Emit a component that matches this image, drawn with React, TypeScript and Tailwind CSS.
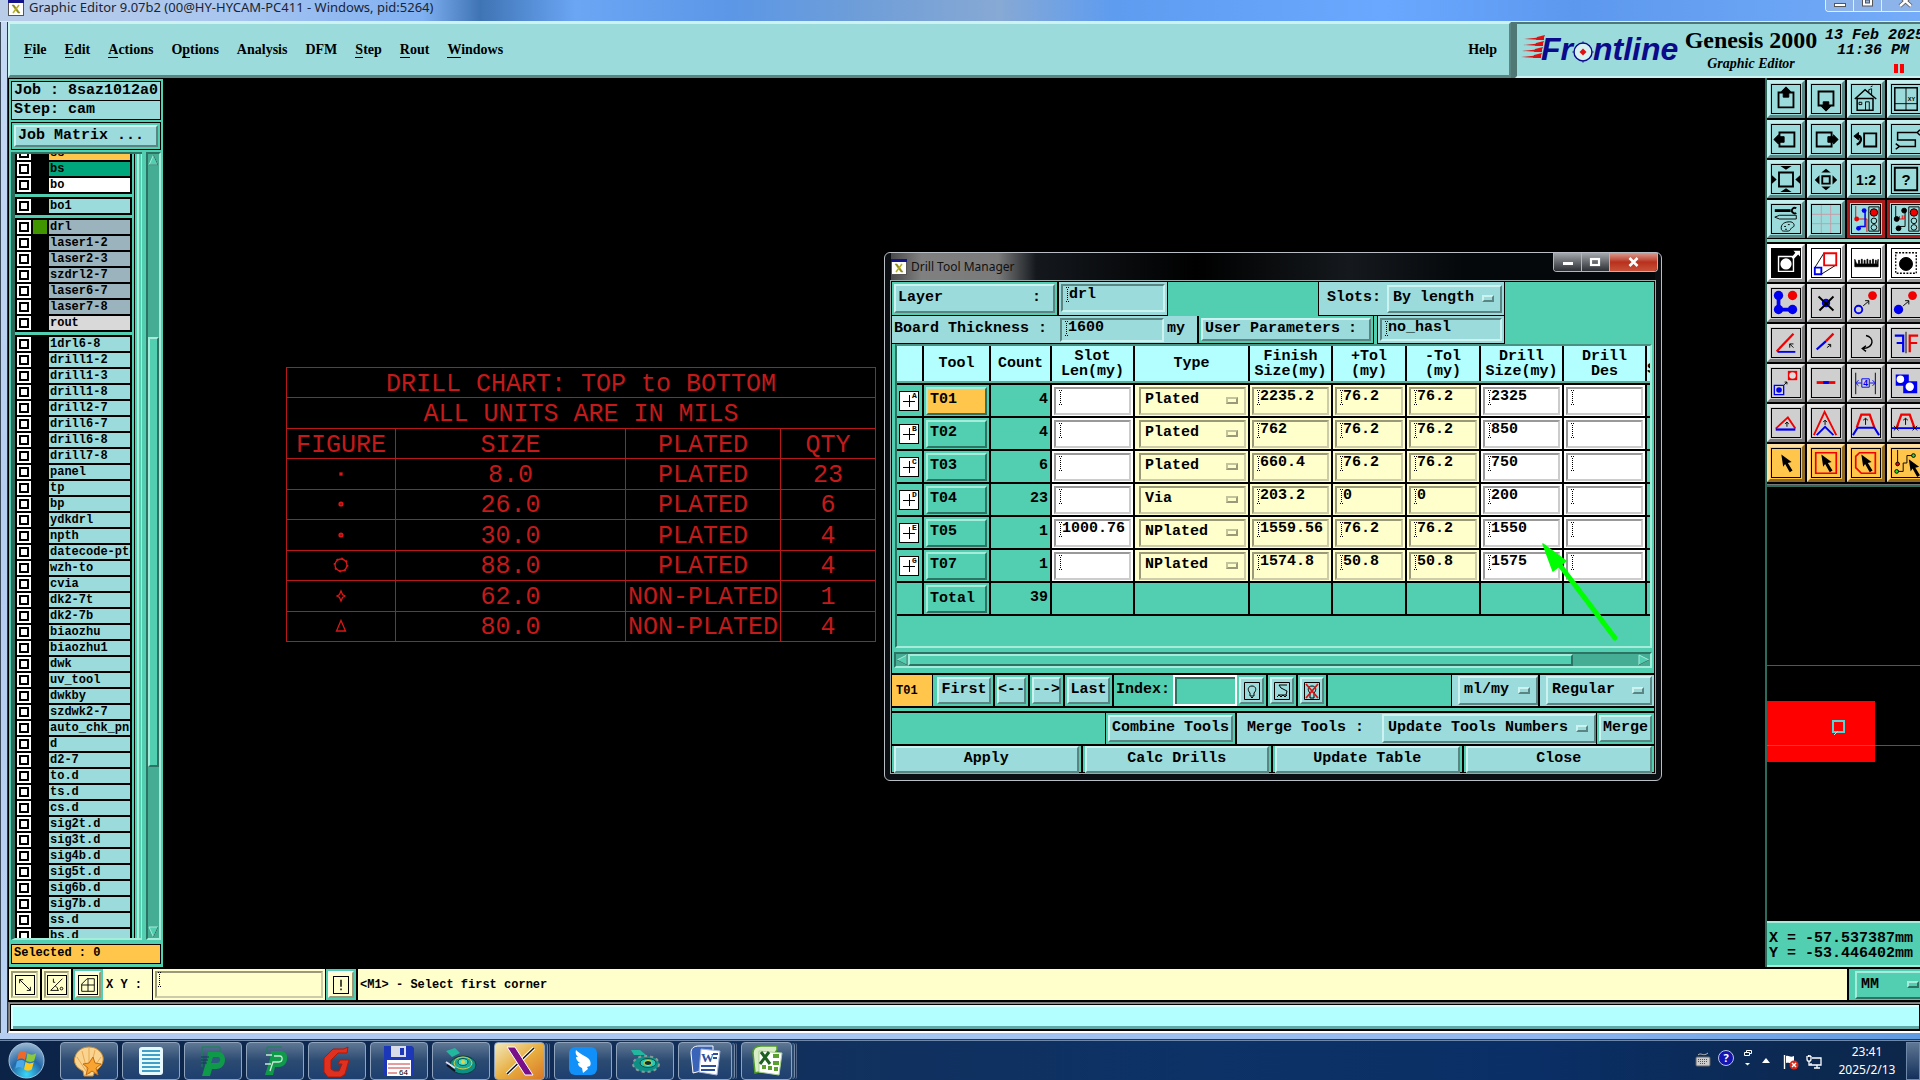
import type { ReactNode } from "react";
import { useState } from "react";

// Motif-style bevels, one set per base colour
const OUT_CYAN = "border-2 border-t-[#cdf3f1] border-l-[#cdf3f1] border-b-[#5a8583] border-r-[#5a8583] bg-[#9bdbdb]";
const IN_CYAN = "border-2 border-t-[#5a8583] border-l-[#5a8583] border-b-[#cdf3f1] border-r-[#cdf3f1] bg-[#9bdbdb]";
const OUT_GREEN = "border-2 border-t-[#a6ecda] border-l-[#a6ecda] border-b-[#2c7363] border-r-[#2c7363] bg-[#52ceb0]";
const IN_CREAM = "border-2 border-t-[#9a9a7a] border-l-[#9a9a7a] border-b-[#ccccaa] border-r-[#ccccaa] bg-[#ffffcc]";
const IN_WHITE = "border-2 border-t-[#999] border-l-[#999] border-b-[#ccc] border-r-[#ccc] bg-white";
const MONO = "font-['Liberation_Mono',monospace] font-bold";

const LAYER_GROUPS: { names: string[]; tone: Record<string, string>; base: string }[] = [
  { names: ["ss", "bs", "bo"], tone: { ss: "bg-[#ffc64b]", bs: "bg-[#00a67c]", bo: "bg-white" }, base: "bg-white" },
  { names: ["bo1"], tone: {}, base: "bg-[#9bdbdb]" },
  {
    names: ["drl", "laser1-2", "laser2-3", "szdrl2-7", "laser6-7", "laser7-8", "rout"],
    tone: { rout: "bg-[#d9d9d9]" },
    base: "bg-[#9ab3bc]",
  },
  {
    names: [
      "1drl6-8", "drill1-2", "drill1-3", "drill1-8", "drill2-7", "drill6-7", "drill6-8", "drill7-8",
      "panel", "tp", "bp", "ydkdrl", "npth", "datecode-ptc", "wzh-to", "cvia", "dk2-7t", "dk2-7b",
      "biaozhu", "biaozhu1", "dwk", "uv_tool", "dwkby", "szdwk2-7", "auto_chk_pnl", "d", "d2-7",
      "to.d", "ts.d", "cs.d", "sig2t.d", "sig3t.d", "sig4b.d", "sig5t.d", "sig6b.d", "sig7b.d", "ss.d", "bs.d",
    ],
    tone: {},
    base: "bg-[#9bdbdb]",
  },
];

const TOOLS = [
  { id: "T01", mark: "A", count: 4, slot: "", type: "Plated", finish: "2235.2", plus: "76.2", minus: "76.2", drill: "2325" },
  { id: "T02", mark: "B", count: 4, slot: "", type: "Plated", finish: "762", plus: "76.2", minus: "76.2", drill: "850" },
  { id: "T03", mark: "C", count: 6, slot: "", type: "Plated", finish: "660.4", plus: "76.2", minus: "76.2", drill: "750" },
  { id: "T04", mark: "D", count: 23, slot: "", type: "Via", finish: "203.2", plus: "0", minus: "0", drill: "200" },
  { id: "T05", mark: "E", count: 1, slot: "1000.76", type: "NPlated", finish: "1559.56", plus: "76.2", minus: "76.2", drill: "1550" },
  { id: "T07", mark: "G", count: 1, slot: "", type: "NPlated", finish: "1574.8", plus: "50.8", minus: "50.8", drill: "1575" },
];

const MENUS: [string, number][] = [
  ["File", 0], ["Edit", 0], ["Actions", 0], ["Options", 1], ["Analysis", -1],
  ["DFM", -1], ["Step", 0], ["Rout", 0], ["Windows", 0],
];

function XIcon() {
  return (
    <svg viewBox="0 0 16 16" className="size-4 shrink-0">
      <rect x="0.5" y="0.5" width="15" height="15" fill="#fff" stroke="#555" />
      <rect x="0" y="0" width="16" height="3" fill="#14148c" />
      <path d="M4 5h2l6 8h-2z" fill="#8a8a10" stroke="#8a8a10" strokeWidth="0.5" />
      <path d="M11 5L5 13" stroke="#b8b020" strokeWidth="1.5" />
    </svg>
  );
}

function TitleBar() {
  return (
    <div className="relative flex h-[22px] items-start border-b border-[#dbe9fb] bg-[linear-gradient(90deg,#b9cde8_0%,#a9c6ef_12%,#7fb0f2_22%,#3f74b4_25%,#6ba6f5_30%,#5b97e6_38%,#6f9ed8_45%,#87a9d4_52%,#5e9cf0_58%,#6aa8ff_72%,#5c98ee_82%,#74acf8_100%)] pl-2">
      <XIcon />
      <span className="ml-[5px] text-[13px] leading-[14px] whitespace-nowrap text-[#1c2430] font-['Noto_Sans',sans-serif]">
        Graphic Editor 9.07b2 (00@HY-HYCAM-PC411 - Windows, pid:5264)
      </span>
      <div className="ml-auto flex h-3 overflow-hidden rounded-bl border-b border-l border-[#e3eefc] text-[#333]">
        <button aria-label="Minimize" className="w-7 border-r border-[#e3eefc] bg-[#8db4ea]">
          <svg viewBox="0 0 28 12" className="h-3 w-7"><rect x="8.5" y="3.5" width="11" height="3" fill="#fff" stroke="#555" /></svg>
        </button>
        <button aria-label="Maximize" className="w-7 border-r border-[#e3eefc] bg-[#8db4ea]">
          <svg viewBox="0 0 28 12" className="h-3 w-7"><rect x="8.5" y="-4" width="10" height="10" fill="#fff" stroke="#555" /><rect x="11.5" y="0" width="4" height="3" fill="#8db4ea" stroke="#555" /></svg>
        </button>
        <button aria-label="Close" className="w-[38px] bg-[#8db4ea]">
          <svg viewBox="0 0 40 12" className="h-3 w-10"><path d="M18 -4L29 6M29 -4L18 6" stroke="#555" strokeWidth="4" /><path d="M18 -4L29 6M29 -4L18 6" stroke="#fff" strokeWidth="2.4" /></svg>
        </button>
      </div>
    </div>
  );
}

function FrontlineLogo() {
  return (
    <svg viewBox="0 0 162 40" className="h-10 w-[162px] shrink-0" aria-label="Frontline">
      {[9, 15, 21, 27].map((y, i) => (
        <g key={y} fill="#e01010">
          <path d={`M${4 - i} ${y + 1}L${24 - i} ${y - 1}v3z`} />
          <path d={`M${17 - i} ${y - 1}l8 -2l-2 5h-7z`} />
        </g>
      ))}
      <g fill="#0a0a8a" fontFamily="Liberation Sans, sans-serif" fontSize="32" fontWeight="bold" fontStyle="italic">
        <text x="21" y="31">Fr</text>
        <text x="73" y="31">ntline</text>
      </g>
      <circle cx="63" cy="23" r="9" fill="#d8f2f2" stroke="#0a0a8a" strokeWidth="1.4" />
      <path d="M63 12v3M63 31v3M52 23h3M71 23h3" stroke="#0a0a8a" strokeWidth="0.6" />
      <path d="M63 19.500l3.500 3.500l-3.500 3.500l-3.500 -3.500z" fill="#e01010" />
    </svg>
  );
}

function Header() {
  return (
    <header className="flex h-14 shrink-0 overflow-hidden bg-[#4f7774] font-['Liberation_Serif',serif] font-bold text-black">
      <nav className={`flex flex-1 items-center border-b-[3px] pl-2.5 text-sm ${OUT_CYAN}`}>
        {MENUS.map(([name, u]) => (
          <button key={name} className="mr-2.5 px-1 text-left leading-4">
            {u < 0 ? name : (
              <>{name.slice(0, u)}<span className="border-b border-black">{name[u]}</span>{name.slice(u + 1)}</>
            )}
          </button>
        ))}
        <button className="mr-3 ml-auto">Help</button>
      </nav>
      <div className="ml-1 flex w-[405px] shrink-0 items-center border-t-2 border-b-2 border-l-2 border-t-[#4f7774] border-b-[#cdf3f1] border-l-[#4f7774] bg-[#9bdbdb]">
        <div className="mb-0.5 ml-[3px]"><FrontlineLogo /></div>
        <div className="ml-px w-[136px] shrink-0 text-center">
          <div className="text-2xl leading-7 whitespace-nowrap">Genesis 2000</div>
          <div className="text-sm leading-5 italic">Graphic Editor</div>
        </div>
        <div className="ml-0.5 h-full w-[105px] shrink-0 pt-1 font-['Liberation_Mono',monospace] text-[15px] leading-[15px] whitespace-nowrap italic">
          <div className="pl-1">13 Feb 2025</div>
          <div className="pl-4">11:36 PM</div>
          <div className="mt-1.5 ml-[73px] flex gap-0.5">
            <span className="h-[9px] w-1 bg-[#f00]" />
            <span className="h-[9px] w-1 bg-[#f00]" />
          </div>
        </div>
      </div>
    </header>
  );
}

function Sidebar() {
  return (
    <aside className={`flex w-[155px] shrink-0 flex-col border-t border-l border-black bg-[#52ceb0] px-0.5 pt-0.5 text-black ${MONO}`}>
      <div className="h-5 border border-black bg-[#9bdbdb] pl-0.5 text-[15px] leading-[18px] whitespace-nowrap">Job : 8saz1012a0</div>
      <div className="-mt-px h-5 border border-black bg-[#9bdbdb] pl-0.5 text-[15px] leading-[18px]">Step: cam</div>
      <div className="mt-0.5 border border-black p-0.5">
        <button className={`flex h-[22px] w-full items-center pl-0.5 text-[15px] ${OUT_CYAN}`}>Job Matrix ...</button>
      </div>
      <div className="mt-0.5 flex min-h-0 flex-1">
        <div className="flex min-w-0 flex-1 overflow-hidden border-t-2 border-b-2 border-l-4 border-t-[#2c7363] border-b-[#a6ecda] border-l-[#2c6b5b]">
          <div className="-mt-2 w-[117px] shrink-0 text-xs">
            {LAYER_GROUPS.map((g, i) => (
              <ul key={i} className={`mb-[3px] bg-black ${i ? "pt-0.5" : ""}`}>
                {g.names.map((n) => (
                  <li key={n} className="flex h-4 gap-0.5 px-0.5 pb-0.5">
                    <input type="checkbox" aria-label={n} className="size-3.5 shrink-0 appearance-none border-2 border-white bg-white shadow-[inset_0_0_0_2px_black] checked:bg-black" />
                    <span className={`w-3.5 shrink-0 ${n === "drl" ? "bg-[#419600]" : ""}`} />
                    <span className={`flex-1 overflow-hidden pl-px leading-[14px] whitespace-nowrap ${g.tone[n] ?? g.base}`}>{n}</span>
                  </li>
                ))}
              </ul>
            ))}
          </div>
          <div className="ml-0.5 w-px bg-black" />
          <div className="ml-0.5 w-1 bg-[#a6ecda]" />
          <div className="ml-0.5 w-0.5 bg-[#a6ecda]" />
        </div>
        <div className="ml-1 flex w-[15px] shrink-0 flex-col border-2 border-t-[#2c7363] border-r-[#a6ecda] border-b-[#a6ecda] border-l-[#2c7363] bg-[#45ad94]">
          <svg viewBox="0 0 11 12" className="h-3 w-[11px]"><path d="M5.5 1L10 11H1z" fill="#52ceb0" stroke="#a6ecda" /><path d="M5.5 1L10 11H1" fill="none" stroke="#2c7363" /></svg>
          <div className="h-[171px]" />
          <div className={`flex-[43] ${OUT_GREEN}`} />
          <div className="flex-[16]" />
          <svg viewBox="0 0 11 12" className="h-3 w-[11px]"><path d="M5.5 11L10 1H1z" fill="#52ceb0" stroke="#a6ecda" /><path d="M5.5 11L10 1" fill="none" stroke="#2c7363" /></svg>
        </div>
      </div>
      <div className="mt-1 mb-[3px] h-5 border border-black bg-[#ffc64b] pl-0.5 text-xs leading-[17px]">Selected : 0</div>
    </aside>
  );
}

const CHART_ROWS: [string, string, string, string][] = [
  ["dot", "8.0", "PLATED", "23"],
  ["ring", "26.0", "PLATED", "6"],
  ["ring", "30.0", "PLATED", "4"],
  ["gear", "88.0", "PLATED", "4"],
  ["diamond", "62.0", "NON-PLATED", "1"],
  ["triangle", "80.0", "NON-PLATED", "4"],
];

function Figure({ kind }: { kind: string }) {
  return (
    <svg viewBox="0 0 20 20" className="mx-auto size-5" fill="none" stroke="#d81818" strokeWidth="1.3">
      {kind === "dot" && <rect x="9" y="9" width="2" height="2" fill="#e01818" />}
      {kind === "ring" && <circle cx="10" cy="10" r="1.6" strokeWidth="2" />}
      {kind === "gear" && (
        <>
          <circle cx="10" cy="10" r="6" />
          <circle cx="10" cy="10" r="6.6" strokeWidth="1.6" strokeDasharray="1.8 3.4" />
        </>
      )}
      {kind === "diamond" && <path d="M10 5l1.500 3.500l2.500 1.500l-2.500 1.500l-1.500 3.500l-1.500 -3.500l-2.500 -1.500l2.500 -1.500z" />}
      {kind === "triangle" && <path d="M10 4.500L14.500 15h-9z" />}
    </svg>
  );
}

function DrillChart() {
  const cell = "border border-[#b81818] p-0 text-center font-normal";
  const text = `${cell} pt-1`;
  return (
    <table className="absolute top-[289px] left-[123px] h-[275px] w-[589px] table-fixed border-collapse text-[25px] leading-6 whitespace-nowrap text-[#c41a1a] font-['Liberation_Mono',monospace]">
      <colgroup>
        <col className="w-[109px]" />
        <col className="w-[230px]" />
        <col className="w-[155px]" />
        <col className="w-[95px]" />
      </colgroup>
      <tbody>
        <tr><th colSpan={4} className={text}>DRILL CHART: TOP to BOTTOM</th></tr>
        <tr><th colSpan={4} className={text}>ALL UNITS ARE IN MILS</th></tr>
        <tr>{["FIGURE", "SIZE", "PLATED", "QTY"].map((h) => <th key={h} className={text}>{h}</th>)}</tr>
        {CHART_ROWS.map(([fig, size, plated, qty]) => (
          <tr key={size}>
            <td className={cell}><Figure kind={fig} /></td>
            <td className={text}>{size}</td>
            <td className={text}>{plated}</td>
            <td className={text}>{qty}</td>
          </tr>
        ))}
      </tbody>
    </table>
  );
}

const B = "#0000f0";
const R = "#f00000";
const POINTER = "M10 6l2 13l2 -3l5 9l3 -2l-5 -8l4 -1z";

// Every glyph is drawn on a 30x30 grid
const VIEW_ICONS: [string, ReactNode][] = [
  ["Pan up", <><path d="M7 8h16v16H7z" fill="none" strokeWidth="2" /><path d="M15 2l5 5h-2v6h-6V7h-2z" fill="#000" /></>],
  ["Pan down", <><path d="M7 7h16v15H7z" fill="none" strokeWidth="2" /><path d="M15 28l5 -5h-2v-5h-6v5h-2z" fill="#000" /></>],
  ["Home", <><path d="M3 15L14 5l12 10M5.500 14v13h17V14M5 14.500h18M9 27" fill="none" strokeWidth="1.6" /><path d="M14.500 27v-9h4v9M7.500 18.500h3v2.500h-3zM18 8V5l3 -1v7M20 2l2 -1" fill="none" /></>],
  ["Grid XY", <><path d="M3 3h24v24H3z" fill="none" strokeWidth="1.6" /><path d="M15 3v24M3 20h24" /><text x="17" y="17" fontSize="6" stroke="none">XY</text></>],
  ["Pan left", <><path d="M8 8h16v15H8z" fill="none" strokeWidth="2" /><path d="M2 15.500l5 -5v2h6v6H7v2z" fill="#000" /></>],
  ["Pan right", <><path d="M5 8h16v15H5z" fill="none" strokeWidth="2" /><path d="M28 15.500l-5 -5v2h-6v6h6v2z" fill="#000" /></>],
  ["Previous view", <><path d="M13 9h13v14H13z" fill="none" strokeWidth="2" /><path d="M5 12h3c3 3 1 8 -3 9" fill="none" strokeWidth="2.600" /><path d="M2 12l5 -4v8z" fill="#000" /></>],
  ["Serpentine", <path d="M30 5l-3 3H6v8h19v7H8l-4 -3M30 11l-3 -3M8 23l-4 3" fill="none" strokeWidth="1.6" />],
  ["Zoom in", <><path d="M7.500 8h15v15h-15z" fill="none" strokeWidth="2" /><path d="M0 11l5 4.500l-5 4.500zM30 11l-5 4.500l5 4.500zM9 1h12l-6 4zM9 29h12l-6 -4z" fill="#000" stroke="none" /></>],
  ["Zoom out", <><path d="M11 12h8v8h-8z" fill="none" strokeWidth="2" /><path d="M8 11v10l-5 -5zM22 11v10l5 -5zM10 8h10l-5 -4zM10 23h10l-5 4z" fill="#000" stroke="none" /></>],
  ["Zoom 1:2", <text x="15" y="21" fontSize="15" textAnchor="middle" stroke="none">1:2</text>],
  ["Query", <><path d="M3 3h24v24H3z" fill="none" strokeWidth="2" /><text x="15" y="21" fontSize="16" textAnchor="middle" stroke="none">?</text></>],
  ["Preferences", <><path d="M3 6h17" strokeWidth="3" /><path d="M26 3.500a3 3 0 1 0 0 5" fill="none" strokeWidth="2" /><path d="M3 13l5 -2h18v4H8z" fill="none" /><path d="M10 26c-1 -6 4 -8 9 -8s6 5 3 6s-1 4 -6 4s-5 0 -6 -2zM13 23h2M17 21h2M14 26h2" fill="none" /></>],
  ["Grid", <path d="M10 0v30M20 0v30M0 10h30M0 20h30" stroke="#c99aa5" />],
  ["Net on", <><path d="M4 1v14h12v14" fill="none" stroke={R} /><path d="M14 5v18H8" fill="none" stroke={B} strokeWidth="1.6" /><circle cx="5" cy="15" r="2.600" fill={R} stroke="none" /><circle cx="13" cy="6" r="2.600" fill={B} stroke="none" /><circle cx="7" cy="25" r="2.600" fill={B} stroke="none" /><path d="M18 2h11v26H18z" fill="none" /><circle cx="23.500" cy="8" r="4" fill={R} /><circle cx="23.500" cy="17" r="3" fill="none" /><circle cx="23.500" cy="24" r="3" fill="none" /></>],
  ["Net off", <><path d="M4 1v14M14 5v18H8" fill="none" /><path d="M6 15h7M8 12v3M11 11v4M13 11v4" stroke={R} /><circle cx="5" cy="15" r="2.600" fill="#000" /><circle cx="13" cy="6" r="2.600" fill="#000" /><circle cx="7" cy="25" r="2.600" fill="#000" /><path d="M18 2h11v26H18z" fill="none" /><circle cx="23.500" cy="8" r="4" fill={R} /><circle cx="23.500" cy="17" r="3" fill="none" /><circle cx="23.500" cy="24" r="3" fill="none" /></>],
];

const EDIT_ICONS: [string, ReactNode][] = [
  ["Select frame", <><path d="M0 0h30v30H0z" fill="#000" /><path d="M7 8h16v16H7z" fill="none" stroke="#fff" strokeWidth="1.5" /><circle cx="15" cy="16" r="6" fill="#fff" stroke="none" /><path d="M21 9l4 -5l-2 -2h7v6l-2 -2l-5 5z" fill="#fff" stroke="none" /></>],
  ["Scale", <><path d="M3 20L13 4M10 27l16 -10" /><path d="M13 4.500h13v13H13z" fill="none" stroke={R} strokeWidth="2" /><path d="M3 20h7v7H3z" fill="#fff" stroke={B} strokeWidth="2" /></>],
  ["Measure", <path d="M3 11v8h25v-8l-1 5h-1v-4h-1v4h-2v-5h-1v5h-2v-4h-1v4h-2v-5h-1v5h-2v-4h-1v4h-2v-5h-1v5H8v-4H7v4H5z" fill="#000" strokeWidth="0.8" />],
  ["Feature", <><path d="M4 4h22v22H4z" fill="none" strokeDasharray="2 1.500" strokeWidth="1.4" /><circle cx="15" cy="16" r="7" fill="#000" /></>],
  ["Connect", <><path d="M7 7v15h15" fill="none" stroke={B} strokeWidth="4" /><g stroke="none"><circle cx="7" cy="7" r="5" fill={B} /><circle cx="7" cy="22" r="5" fill={B} /><circle cx="22" cy="22" r="5" fill={B} /><circle cx="22" cy="7" r="5" fill={R} /></g></>],
  ["Delete", <><circle cx="15" cy="15" r="4.500" fill={B} stroke="none" /><path d="M7 8l16 15M23 8L8 23" strokeWidth="2" /></>],
  ["Copy", <><circle cx="7" cy="22" r="4" fill="none" stroke={B} strokeWidth="2" /><circle cx="22" cy="7" r="4.700" fill={R} stroke="none" /><path d="M12 18l6 -5M14 12.500h4v4" fill="none" /></>],
  ["Move", <><circle cx="7" cy="22" r="5" fill={B} stroke="none" /><circle cx="22" cy="7" r="4.700" fill={R} stroke="none" /><path d="M12 18l6 -5M14 12.500h4v4" fill="none" /></>],
  ["Angle", <><path d="M5 24L23 5" stroke={R} strokeWidth="2.400" /><path d="M6 24.500h19" stroke={B} strokeWidth="2" /><path d="M19 16h4M19 16v4M19 16l4 4" fill="none" /></>],
  ["Extend", <><path d="M5 22l10 -9" stroke={B} strokeWidth="2.400" /><path d="M15 13l8 -8" stroke={R} strokeWidth="2.400" /><path d="M16 20l4 -3M17 16.500h3v3" fill="none" /></>],
  ["Rotate", <path d="M15 7c9 2 9 13 -3 14M15 18l-4 3l4 3" fill="none" strokeWidth="1.500" />],
  ["Mirror", <><path d="M3 7h9v18M5 15h7" fill="none" stroke={B} strokeWidth="2.400" /><path d="M15 3v23" /><path d="M28 7h-9v18M19 15h8" fill="none" stroke={R} strokeWidth="2.400" /></>],
  ["Step copy", <><path d="M17 2h10v10H17z" fill={R} stroke="none" /><circle cx="22" cy="7" r="3.500" fill="#ddd" stroke="none" /><path d="M2.500 17.500h10v10h-10z" fill="none" stroke={B} strokeWidth="1.4" /><circle cx="7.500" cy="22.500" r="3" fill={B} stroke="none" /><path d="M13 17l3 -3M13.500 14h2.500v2.500" fill="none" /></>],
  ["Break", <><path d="M5 14.500h20" stroke={R} strokeWidth="3" /><path d="M12 14.500h6" stroke={B} strokeWidth="3" /></>],
  ["Space", <><path d="M4 4v23M25 4v23" /><g stroke={B} fill="none"><path d="M5 15h5M19 15h5M7 12l-3 3l3 3M22 12l3 3l-3 3M10.500 10.500h8v9h-8z" /></g><text x="14.500" y="18.500" fontSize="9" textAnchor="middle" fill={B} stroke="none">4</text></>],
  ["Merge shapes", <><path d="M4 6h14v7h9v13H12v-8H4z" fill={B} stroke="none" /><circle cx="9" cy="11" r="4" fill="#fff" stroke="none" /><circle cx="19" cy="19" r="4.500" fill="#fff" stroke="none" /></>],
  ["Raise", <><path d="M4 21L17 9l8 12" fill="none" stroke={R} strokeWidth="2" /><path d="M4 22h21" stroke={B} strokeWidth="2.400" /><path d="M16 19v-5M14 16l2 -2l2 2" fill="none" /></>],
  ["Raise peak", <><path d="M2 28L13.500 3L26 28" fill="none" stroke={R} strokeWidth="2" /><path d="M5 28l9 -9l9 9" fill="none" stroke={B} strokeWidth="2" /><path d="M14 17v-5M12 14l2 -2l2 2" fill="none" /></>],
  ["Raise flat", <><path d="M5 20l5 -14h9l5 14" fill="none" stroke={R} strokeWidth="2.400" /><path d="M1 28l5 -8h18l5 8" fill="none" stroke={B} strokeWidth="2.200" /><path d="M14.500 17v-7M12 12l2.500 -2l2.500 2" fill="none" /></>],
  ["Raise line", <><path d="M5 20l5 -14h9l5 14" fill="none" stroke={R} strokeWidth="2.400" /><path d="M0 20.500h30" stroke={B} strokeWidth="2" /><path d="M14.500 17v-7M12 12l2.500 -2l2.500 2M2 18l5 5M7 18l-5 5M22 18l5 5M27 18l-5 5" fill="none" /></>],
  ["Pointer", <path d={POINTER} fill="#000" stroke="none" />],
  ["Pointer box", <><path d="M4 4h22v22H4z" fill="none" stroke={R} strokeWidth="1.800" /><path d={POINTER} fill="#000" stroke="none" /></>],
  ["Pointer polygon", <><path d="M8 4h17v22H10l-6 -6V8z" fill="none" stroke={R} strokeWidth="1.800" /><path d={POINTER} fill="#000" stroke="none" /></>],
  ["Pointer net", <><path d="M6 1v15M6 24h6v-9h4V7h6" fill="none" /><circle cx="6" cy="16" r="2" fill={R} /><circle cx="5" cy="24" r="2" fill="#2d2" /><circle cx="23" cy="7" r="2" fill="#2d2" /><path d={POINTER} transform="translate(8 5)" fill="#000" stroke="none" /></>],
];

function ToolButton({ name, tone, children }: { name: string; tone: string; children: ReactNode }) {
  return (
    <button aria-label={name} className={`flex size-[38px] items-center justify-center border-[3px] ${tone}`}>
      <svg viewBox="0 0 30 30" className="size-[30px] shrink-0 border border-black font-['Liberation_Sans',sans-serif] font-bold" stroke="#000">
        {children}
      </svg>
    </button>
  );
}

const TONE_CYAN = "border-t-[#c3efee] border-l-[#c3efee] border-b-[#578886] border-r-[#578886] bg-[#9bdbdb]";
const TONE_RED = "border-[#a81c1c] bg-[#9bdbdb]";
const TONE_WHITE = "border-t-white border-l-white border-b-[#999] border-r-[#999] bg-white";
const TONE_GRAY = "border-t-[#e8e8e8] border-l-[#e8e8e8] border-b-[#7b7b7b] border-r-[#7b7b7b] bg-[#cfcfcf]";
const TONE_AMBER = "border-t-[#ffe0a0] border-l-[#ffe0a0] border-b-[#8f6a20] border-r-[#8f6a20] bg-[#ffc64b]";

function editTone(i: number) {
  if (i < 4) return TONE_WHITE;
  return i < 20 ? TONE_GRAY : TONE_AMBER;
}

function ToolPanel() {
  return (
    <aside className="flex w-[155px] shrink-0 flex-col overflow-hidden border-l-2 border-[#2c6b5b] bg-black">
      <div className="mt-0.5 grid grid-cols-[repeat(4,38px)] gap-0.5">
        {VIEW_ICONS.map(([name, art], i) => (
          <ToolButton key={name} name={name} tone={i > 13 ? TONE_RED : TONE_CYAN}>{art}</ToolButton>
        ))}
      </div>
      <div className="mt-px mb-0.5 h-[3px] shrink-0 bg-[#8fdcc8]" />
      <div className="grid grid-cols-[repeat(4,38px)] gap-0.5">
        {EDIT_ICONS.map(([name, art], i) => (
          <ToolButton key={name} name={name} tone={editTone(i)}>{art}</ToolButton>
        ))}
      </div>
      <div className="mt-0.5 h-[3px] shrink-0 border-t border-[#777] bg-[#2c6b5b]" />
      <div className="relative min-h-0 flex-1 bg-black">
        <svg viewBox="0 0 153 433" className="absolute top-0 left-0 h-[433px] w-[153px]">
          <rect x="0" y="214" width="108" height="61" fill="#f00" />
          <path d="M0 178.500h153M0 258.500h153" stroke="#1d7a1d" />
          <path d="M0 258.500h108" stroke="#b06010" />
          <path d="M66 234h11v11H66z" fill="none" stroke="#4fd8d8" strokeWidth="2" />
          <path d="M67 248l4 -4" stroke="#d8d8d8" />
        </svg>
      </div>
      <div className={`h-[46px] shrink-0 border-t-2 border-b-2 border-t-[#a6ecda] border-b-[#a6ecda] bg-[#52ceb0] pt-2 pl-0.5 text-[15px] leading-[15px] whitespace-pre text-black ${MONO}`}>
        <div>X = -57.537387mm</div>
        <div>Y = -53.446402mm</div>
      </div>
    </aside>
  );
}

function Caret() {
  return (
    <svg viewBox="0 0 3 16" className="pointer-events-none absolute top-[3px] left-[5px] h-4 w-[3px]" stroke="#000">
      <path d="M1.500 2v12" strokeDasharray="1 1" />
      <path d="M0 0.500h1M2 0.500h1M0 14.500h1M2 14.500h1" />
    </svg>
  );
}

function Field({ label, value, tone, pad = "pb-2", className = "h-7 w-full" }: { label: string; value: string; tone: string; pad?: string; className?: string }) {
  return (
    <label className={`relative block ${className}`}>
      <Caret />
      <input aria-label={label} defaultValue={value} className={`block h-full w-full pl-1.5 text-[15px] leading-4 outline-none ${pad} ${tone}`} />
    </label>
  );
}

function OptionMenu({ label, options, tone, knob, className }: { label: string; options: string[]; tone: string; knob: string; className: string }) {
  return (
    <label className={`relative block ${className}`}>
      <select aria-label={label} className={`block h-full w-full appearance-none pl-1 text-[15px] outline-none ${tone}`}>
        {options.map((o) => <option key={o}>{o}</option>)}
      </select>
      <span className={`pointer-events-none absolute top-1/2 right-2 -mt-1 h-[7px] w-3 border-2 ${knob}`} />
    </label>
  );
}

const KNOB_CYAN = "border-t-[#cdf3f1] border-l-[#cdf3f1] border-b-[#5a8583] border-r-[#5a8583]";
const KNOB_CREAM = "border-t-[#c4c49c] border-l-[#c4c49c] border-b-[#9a9a7a] border-r-[#9a9a7a]";

function ToolTable({ current, onSelect }: { current: string; onSelect: (id: string) => void }) {
  const head = "h-[35px] border-r-2 border-black bg-[#b3ffff] p-0 text-center text-[15px] leading-[15px] font-bold overflow-hidden";
  const cell = "h-[33px] border-r-2 border-b-2 border-black px-0.5 py-0";
  return (
    <table className="w-[757px] table-fixed border-separate border-spacing-0 text-[15px]">
      <colgroup>
        <col className="w-[27px]" /><col className="w-[67px]" /><col className="w-[61px]" /><col className="w-[83px]" />
        <col className="w-[115px]" /><col className="w-[83px]" /><col className="w-[74px]" /><col className="w-[74px]" />
        <col className="w-[83px]" /><col className="w-[83px]" /><col className="w-[7px]" />
      </colgroup>
      <thead>
        <tr>
          {["", "Tool", "Count", "Slot\nLen(my)", "Type", "Finish\nSize(my)", "+Tol\n(my)", "-Tol\n(my)", "Drill\nSize(my)", "Drill\nDes"].map((h, i) => (
            <th key={i} className={`${head} whitespace-pre`}>{h}</th>
          ))}
          <th className="overflow-hidden bg-[#b3ffff] p-0 text-left align-bottom font-bold">S</th>
        </tr>
        <tr><td colSpan={11} className="h-1 border-b-2 border-b-black bg-[#5fae9c] p-0" /></tr>
      </thead>
      <tbody>
        {TOOLS.map((t) => (
          <tr key={t.id}>
            <td className={cell}>
              <svg viewBox="0 0 20 20" className="size-5 bg-white" stroke="#000">
                <rect x="0.500" y="0.500" width="19" height="19" fill="#fff" />
                <path d="M4 10.500h12M10.500 4v12" />
                <text x="13" y="7" fontSize="8" stroke="none">{t.mark}</text>
              </svg>
            </td>
            <td className={cell}>
              <button onClick={() => onSelect(t.id)} className={`block h-7 w-full pl-0.5 text-left ${OUT_GREEN} ${t.id === current ? "bg-[#ffc64b]!" : ""}`}>{t.id}</button>
            </td>
            <td className={`${cell} text-right`}>{t.count}</td>
            <td className={`${cell} bg-white`}><Field label={`${t.id} slot length`} value={t.slot} tone={IN_WHITE} /></td>
            <td className={`${cell} bg-[#ffffcc]`}>
              <OptionMenu label={`${t.id} type`} options={[t.type, "Plated", "NPlated", "Via"].filter((o, i, a) => a.indexOf(o) === i)} tone={IN_CREAM} knob={KNOB_CREAM} className="mx-0.5 h-7 w-[107px]" />
            </td>
            <td className={`${cell} bg-[#ffffcc]`}><Field label={`${t.id} finish size`} value={t.finish} tone={IN_CREAM} /></td>
            <td className={`${cell} bg-[#ffffcc]`}><Field label={`${t.id} plus tolerance`} value={t.plus} tone={IN_CREAM} /></td>
            <td className={`${cell} bg-[#ffffcc]`}><Field label={`${t.id} minus tolerance`} value={t.minus} tone={IN_CREAM} /></td>
            <td className={`${cell} bg-white`}><Field label={`${t.id} drill size`} value={t.drill} tone={IN_WHITE} /></td>
            <td className={`${cell} bg-white`}><Field label={`${t.id} designation`} value="" tone={IN_WHITE} /></td>
            <td className="border-b-2 border-black" />
          </tr>
        ))}
        <tr>
          <td className={cell} />
          <td className={cell}><div className={`h-7 pl-0.5 leading-6 ${OUT_GREEN}`}>Total</div></td>
          <td className={`${cell} text-right`}>{TOOLS.reduce((n, t) => n + t.count, 0)}</td>
          {[0, 1, 2, 3, 4, 5, 6].map((i) => <td key={i} className={cell} />)}
          <td className="border-b-2 border-black" />
        </tr>
      </tbody>
    </table>
  );
}

function NavButton({ label, width, children }: { label: string; width: string; children: ReactNode }) {
  return (
    <div className={`h-full border-r-2 border-black p-0.5 ${width}`}>
      <button aria-label={label} className={`flex h-full w-full items-center justify-center whitespace-nowrap ${OUT_CYAN}`}>{children}</button>
    </div>
  );
}

function DrillToolManager() {
  const [current, setCurrent] = useState("T01");
  return (
    <section className={`absolute top-[252px] left-[884px] w-[778px] rounded-md border border-[#b9bec4] bg-[#0b0f14] px-[6px] pb-[7px] text-[15px] text-black ${MONO}`}>
      <div className="flex h-7 items-start bg-[linear-gradient(90deg,#4a4a4a_0%,#808080_4%,#7a7a7a_14%,#14181d_19%,#000_40%,#15191d_60%,#05080b_75%)] pt-1.5">
        <XIcon />
        <h1 className="ml-1 text-xs leading-4 font-normal text-[#111] font-['Noto_Sans',sans-serif]">Drill Tool Manager</h1>
        <div className="-mt-1.5 -mr-[3px] ml-auto flex h-[19px] overflow-hidden rounded-b border border-t-0 border-[#b5b5b5]">
          <button aria-label="Minimize window" className="w-7 border-r border-[#b5b5b5] bg-linear-to-b from-[#a5a8ac] to-[#2e3236]">
            <svg viewBox="0 0 28 18" className="h-full w-7"><rect x="9" y="9" width="10" height="3" fill="#fff" /></svg>
          </button>
          <button aria-label="Maximize window" className="w-7 border-r border-[#b5b5b5] bg-linear-to-b from-[#a5a8ac] to-[#2e3236]">
            <svg viewBox="0 0 28 18" className="h-full w-7"><rect x="9" y="6" width="8" height="6" fill="none" stroke="#fff" strokeWidth="2.200" /></svg>
          </button>
          <button aria-label="Close window" className="w-[47px] bg-linear-to-b from-[#d99a90] via-[#b8301c] to-[#c85038]">
            <svg viewBox="0 0 46 18" className="h-full w-full"><path d="M19 5l8 8M27 5l-8 8" stroke="#fff" strokeWidth="2.600" /></svg>
          </button>
        </div>
      </div>
      <div className="border border-black bg-[#52ceb0] outline outline-[#9aa]">
        {/* layer / slots */}
        <div className="flex h-[34px]">
          <div className="w-[167px] border-r-2 border-b border-black p-0.5">
            <button className={`flex h-full w-full items-center justify-between pr-3 pl-0.5 ${OUT_CYAN}`}><span>Layer</span><span>:</span></button>
          </div>
          <div className="w-[109px] border-r border-b border-black bg-[#9bdbdb] p-0.5">
            <Field label="Layer" value="drl" tone={IN_CYAN} />
          </div>
          <div className="w-[150px]" />
          <div className="flex w-[187px] items-center border-r border-b border-l border-black bg-[#9bdbdb] pr-0.5 pl-2">
            <span className="flex-1">Slots:</span>
            <OptionMenu label="Slots" options={["By length", "By center"]} tone={OUT_CYAN} knob={KNOB_CYAN} className="h-7 w-[115px]" />
          </div>
        </div>
        {/* board parameters */}
        <div className="flex h-7">
          <div className="flex w-[307px] items-center border-r-2 border-b border-black bg-[#9bdbdb] pl-0.5">
            <span className="w-[166px] whitespace-nowrap">Board Thickness :</span>
            <Field label="Board thickness" value="1600" tone={IN_CYAN} pad="pb-1" className="h-6 w-[104px]" />
            <span className="ml-[3px]">my</span>
          </div>
          <div className="w-[175px] border-r border-b border-black p-0.5">
            <button className={`flex h-full w-full items-center justify-between pr-3 pl-0.5 ${OUT_CYAN}`}><span>User Parameters</span><span>:</span></button>
          </div>
          <div className="ml-[3px] w-[128px] border-r border-b border-l border-black bg-[#9bdbdb] p-0.5">
            <Field label="User parameters" value="no_hasl" tone={IN_CYAN} pad="pb-1" className="h-[23px]" />
          </div>
        </div>
        {/* tool list */}
        <div className="mr-0.5 ml-[3px] h-[304px] overflow-hidden border-2 border-t-[#4a9080] border-r-[#a6ecda] border-b-[#a6ecda] border-l-[#2c7363]">
          <ToolTable current={current} onSelect={setCurrent} />
        </div>
        <div className="mx-0.5 mt-1 flex h-4 border-2 border-t-[#2c7363] border-r-[#a6ecda] border-b-[#a6ecda] border-l-[#2c7363] bg-[#45ad94]">
          <svg viewBox="0 0 12 12" className="size-3"><path d="M1 6l10 -5v10z" fill="#52ceb0" stroke="#a6ecda" /><path d="M1 6l10 5V1" fill="none" stroke="#2c7363" /></svg>
          <div className={`flex-1 ${OUT_GREEN}`} />
          <div className="w-[65px]" />
          <svg viewBox="0 0 12 12" className="size-3"><path d="M11 6L1 1v10z" fill="#52ceb0" stroke="#a6ecda" /><path d="M11 6L1 11" fill="none" stroke="#2c7363" /></svg>
        </div>
        {/* navigation */}
        <div className="mt-[5px] flex h-[35px] border-y-2 border-black">
          <div className="mr-0.5 flex w-[41px] items-center border-r border-black bg-[#ffc64b] pl-1 text-xs">{current}</div>
          <NavButton label="First" width="w-[60px]">First</NavButton>
          <NavButton label="Previous" width="w-[35px]">&lt;--</NavButton>
          <NavButton label="Next" width="w-[35px]">--&gt;</NavButton>
          <NavButton label="Last" width="w-[49px]">Last</NavButton>
          <label className="flex items-center pl-0.5 whitespace-nowrap">
            Index:
            <input className="ml-[3px] h-[31px] w-16 border-2 border-white bg-[#52ceb0] shadow-[inset_2px_2px_0_#2c7363] outline-none" />
          </label>
          <NavButton label="Light" width="w-[31px]">
            <svg viewBox="0 0 16 18" className="h-[18px] w-4" fill="none" stroke="#000"><path d="M0.500 0.500h15v17H0.500zM6 11c-3 -3 -2 -7 2 -7s5 4 2 7v3H6zM7 15.500h2" /></svg>
          </NavButton>
          <NavButton label="Snake" width="w-[30px]">
            <svg viewBox="0 0 16 18" className="h-[18px] w-4" fill="none" stroke="#000"><path d="M0.500 0.500h15v17H0.500zM13 3H5l2 3l6 3l-1 4H4M3 15l2 -2l2 2l2 -2l2 2l2 -2" /></svg>
          </NavButton>
          <NavButton label="Clear" width="w-[30px]">
            <svg viewBox="0 0 16 18" className="h-[18px] w-4" fill="none" stroke="#000"><path d="M0.500 0.500h15v17H0.500zM6 11c-3 -3 -2 -7 2 -7s5 4 2 7v5H6z" /><path d="M2 2l12 14M14 2L2 16" stroke="#e01010" strokeWidth="1.800" /></svg>
          </NavButton>
          <div className="ml-auto flex w-[89px] items-center border-r-2 border-l border-black bg-[#9bdbdb] pl-1.5">
            <OptionMenu label="Units" options={["ml/my", "inch/mil"]} tone={OUT_CYAN} knob={KNOB_CYAN} className="h-[29px] w-full" />
          </div>
          <div className="flex w-[114px] items-center bg-[#9bdbdb] pr-0.5 pl-1.5">
            <OptionMenu label="Mode" options={["Regular", "Via"]} tone={OUT_CYAN} knob={KNOB_CYAN} className="h-[29px] w-full" />
          </div>
        </div>
        <div className="mt-[3px] flex h-[35px] border-y-2 border-black">
          <div className="w-[214px] border-r border-black" />
          <NavButton label="Combine Tools" width="w-[131px]">Combine Tools</NavButton>
          <div className="flex flex-1 items-center bg-[#9bdbdb] pl-2.5 whitespace-nowrap">
            <span className="flex-1">Merge Tools :</span>
            <OptionMenu label="Merge tools" options={["Update Tools Numbers", "Keep Tools Numbers"]} tone={OUT_CYAN} knob={KNOB_CYAN} className="h-[29px] w-[214px]" />
          </div>
          <div className="w-[58px] border-l border-black p-0.5">
            <button className={`flex h-full w-full items-center justify-center ${OUT_CYAN}`}>Merge</button>
          </div>
        </div>
        <div className="grid h-[26px] grid-cols-4">
          {["Apply", "Calc Drills", "Update Table", "Close"].map((b) => (
            <div key={b} className="border-r-2 border-black px-0.5 pb-0.5 last:border-r-0">
              <button className={`flex h-full w-full items-center justify-center ${OUT_CYAN}`}>{b}</button>
            </div>
          ))}
        </div>
      </div>
      <svg viewBox="0 0 80 104" className="pointer-events-none absolute top-[288px] left-[655px] h-[104px] w-20">
        <path d="M16 19L75 97" stroke="#0f0" strokeWidth="5" strokeLinecap="round" />
        <path d="M3 3l23 17l-13 10z" fill="#0f0" stroke="#0f0" strokeWidth="1.500" strokeLinejoin="round" />
      </svg>
    </section>
  );
}

function CommandRow() {
  const art = "size-5 border border-black";
  return (
    <div className={`flex h-[35px] shrink-0 border-y-2 border-l border-black bg-[#ffffcc] text-xs text-black ${MONO}`}>
      <div className="w-[33px] border-r-2 border-black p-0.5">
        <button aria-label="Diagonal" className={`flex h-full w-full items-center justify-center ${IN_CREAM}`}>
          <svg viewBox="0 0 20 20" className={art} fill="none" stroke="#000"><path d="M4 4l12 12M4 8V4h4M12 16h4v-4" /></svg>
        </button>
      </div>
      <div className="w-[31px] border-r-2 border-black p-0.5">
        <button aria-label="Angle" className={`flex h-full w-full items-center justify-center ${IN_CREAM}`}>
          <svg viewBox="0 0 20 20" className={art} fill="none" stroke="#000"><path d="M3 16L16 3M3 16h9M8 11c2 1 3 3 3 5M6 3v4h2" /><circle cx="15" cy="14" r="1.500" /></svg>
        </button>
      </div>
      <div className="w-[30px] bg-[#52ceb0] p-0.5">
        <button aria-label="Snap grid" className="flex h-full w-full items-center justify-center border-2 border-t-[#ffffe8] border-r-[#9a9a7a] border-b-[#9a9a7a] border-l-[#ffffe8] bg-[#ffffcc]">
          <svg viewBox="0 0 18 20" className={art} fill="none" stroke="#000"><path d="M2 9l6 -6h8v14H2zM9 3v14M2 10h14" /></svg>
        </button>
      </div>
      <label className="flex items-center pl-[3px]">
        <span className="w-[46px]">X Y :</span>
        <span className="relative block h-[31px] w-[173px] border-l border-black p-0.5">
          <Caret />
          <input className={`block h-full w-full pl-2 outline-none ${IN_CREAM}`} />
        </span>
      </label>
      <div className="w-[33px] border-r-2 border-l border-black bg-[#52ceb0] p-0.5">
        <button aria-label="Alert" className="flex h-full w-full items-center justify-center border-2 border-t-[#ffffe8] border-r-[#9a9a7a] border-b-[#9a9a7a] border-l-[#ffffe8] bg-[#ffffcc]">
          <svg viewBox="0 0 16 18" className="h-[18px] w-4 border border-black" stroke="#000"><path d="M8 3v8M8 13v2" strokeWidth="1.600" /></svg>
        </button>
      </div>
      <div className="flex flex-1 items-center pl-0.5">&lt;M1&gt; - Select first corner</div>
      <div className="flex w-[73px] shrink-0 items-center overflow-hidden border-l-2 border-black bg-[#52ceb0] pl-1.5">
        <OptionMenu label="Units" options={["MM", "INCH"]} tone={OUT_GREEN} knob="border-t-[#a6ecda] border-l-[#a6ecda] border-b-[#2c7363] border-r-[#2c7363]" className="h-[28px] w-[72px] shrink-0" />
      </div>
    </div>
  );
}

const TASKS: { name: string; width: string; active?: boolean; stack?: boolean; art: ReactNode }[] = [
  { name: "Shell", width: "w-[58px]", art: <><path d="M11 31l-1 -5C3 23 0 17 2 12C4 5 10 2 16 2s12 3 14 10c1 5 -2 11 -8 14l-2 5z" fill="#f8d490" stroke="#c98a30" /><path d="M15 29L4 12M15 29L9 6M16 29V3M16 29l6 -24M16 29l12 -17" stroke="#e8a850" /><path d="M20 12l2 6l6 1l-5 4l2 7l-6 -4l-6 4l2 -7l-5 -4l6 -1z" fill="#f8a430" stroke="#c86a10" /></> },
  { name: "Notepad", width: "w-[58px]", art: <><rect x="4" y="2" width="24" height="28" rx="3" fill="#e8f8ff" /><path d="M7 6h18M7 10h18M7 14h18M7 18h18M7 22h18M7 26h18" stroke="#3f9fc8" strokeWidth="1.800" /></> },
  { name: "Plot", width: "w-[58px]", art: <><path d="M5 2h18M5 2v20M23 2v4" fill="none" stroke="#0d8a4a" /><path d="M11 7h11c8 0 9 17 -3 17h-4l-2 7H5l5 -17z" fill="#0f9a4a" /><path d="M16 12h5c3 0 3 6 -1 6h-6z" fill="#2f5a80" /><path d="M4 12h8M4 15h7M4 18h6" stroke="#123a5a" /></> },
  { name: "Plot 2", width: "w-[58px]", art: <><path d="M8 2h15M8 2v8" fill="none" stroke="#0d8a4a" /><path d="M12 6h10c9 0 8 16 -2 16h-4l-2 8H6l5 -16z" fill="#0f9a4a" /><path d="M15 11h6c3 0 3 6 -1 6h-6l-3 9M7 10h6M6 19h6" stroke="#c8e8d8" strokeWidth="1.300" fill="none" /></> },
  { name: "Genesis", width: "w-[58px]", art: <path d="M27 2l-1 6h-9l-7 7v9l3 2h5l3 -7h-4l2 -4h9l-4 14l-4 3H7l-4 -5V13l9 -9h11z" fill="#e03020" stroke="#b01808" /> },
  { name: "Disk", width: "w-[58px]", art: <><path d="M1 1h28l2 2v28H1z" fill="#1c38b8" /><rect x="8" y="1" width="15" height="11" fill="#d8dce8" /><rect x="17" y="3" width="4" height="7" fill="#1c38b8" /><rect x="4" y="15" width="24" height="16" fill="#fff" /><path d="M5 19h22M5 23h22M5 28h9" stroke="#c83838" /><text x="16" y="30" fontSize="8" fill="#000" fontFamily="Liberation Sans">64</text></> },
  { name: "Gerber tool", width: "w-[58px]", art: <><ellipse cx="18" cy="20" rx="13" ry="9" fill="#0e8f86" stroke="#073c3a" /><ellipse cx="18" cy="18" rx="9" ry="6" fill="#1aa898" stroke="#e0d040" /><ellipse cx="18" cy="17" rx="5" ry="3.500" fill="#40e0d0" stroke="#0a5048" /><circle cx="18" cy="17" r="2" fill="#e8d040" /><path d="M1 6l9 -3l5 5l-8 4z" fill="#22b8a0" /><path d="M1 17l9 6" stroke="#dde" strokeWidth="2" /><path d="M2 20l8 6" stroke="#112" strokeWidth="2" /></> },
  { name: "Graphic Editor", width: "w-[51px]", active: true, stack: true, art: <><path d="M30 3L3 29" stroke="#fff" strokeWidth="3.500" /><path d="M30 3L3 29" stroke="#111" strokeWidth="1.500" /><path d="M3 2h8l18 28h-8z" fill="#7a0f8a" stroke="#fff" /></> },
  { name: "Wing", width: "w-[58px]", art: <><rect x="2" y="2" width="28" height="28" rx="6" fill="#1090f8" /><path d="M9 5c5 5 10 6 13 9c2 3 2 5 1 7l-3 1l1 2l-5 4l-1 -5c-3 -1 -4 -3 -4 -5l2 0c-3 -2 -4 -4 -4 -6l2 0c-2 -2 -3 -4 -2 -7z" fill="#fff" /></> },
  { name: "Gerber tool 2", width: "w-[58px]", art: <><ellipse cx="17" cy="19" rx="13" ry="8" fill="#0e8f86" stroke="#8a9a9a" strokeDasharray="3 3" strokeWidth="2" /><ellipse cx="19" cy="18" rx="8" ry="4.500" fill="#24c8b8" stroke="#0a5048" /><ellipse cx="19" cy="18" rx="4" ry="2.500" fill="#083030" stroke="#e0e040" /><path d="M2 5h9l6 5H5z" fill="#22b8a0" /></> },
  { name: "Word", width: "w-[54px]", stack: true, art: <><path d="M2 8c0 -5 3 -7 8 -7h14v4L12 26l-8 2z" fill="#3a64b8" stroke="#fff" /><path d="M12 4l19 2l-3 24l-18 -3z" fill="#fff" stroke="#9fb4dc" /><text x="12" y="17" fontSize="13" fontWeight="bold" fill="#2b4f9e" fontFamily="Liberation Serif">W</text><path d="M24 9h5M24 13h4M12 21h15M12 25h14" stroke="#2b4f9e" strokeWidth="2" /></> },
  { name: "Excel", width: "w-[51px]", stack: true, art: <><path d="M2 8c0 -5 3 -7 8 -7h16v4L12 26l-8 2z" fill="#d8ecc8" stroke="#4f9a28" strokeWidth="1.500" /><path d="M8 6l23 2l-3 22l-20 -3z" fill="#fff" stroke="#a8cf90" /><path d="M22 11h6M11 22h4M17 23h4M23 24h4M22 18h6" stroke="#5aa02c" strokeWidth="4" /><path d="M10 7l9 12M18 7L9 19" stroke="#1f5f20" strokeWidth="3" /></> },
];

function Taskbar() {
  return (
    <footer className="flex h-10 shrink-0 items-center border-t border-[#6f87a8] bg-[linear-gradient(90deg,#0b2347_0%,#12305c_40%,#0c3266_62%,#0a2f66_80%,#0c2648_100%)] text-white">
      <button aria-label="Start" className="ml-2 size-[37px] shrink-0">
        <svg viewBox="0 0 38 38">
          <defs><radialGradient id="orb" cx="50%" cy="90%" r="90%"><stop offset="0" stopColor="#39d8f8" /><stop offset="0.500" stopColor="#2468a8" /><stop offset="1" stopColor="#9db8d0" /></radialGradient></defs>
          <circle cx="19" cy="19" r="18" fill="url(#orb)" stroke="#a8c4dc" />
          <path d="M11 11c3 -2 6 -2 8 0l-1.500 7.500c-3 -2 -5 -2 -8 0z" fill="#f06828" />
          <path d="M20 11.500c3 2 6 2 9 0l-2 7.500c-2 2 -6 2 -8.500 0z" fill="#8cc83c" />
          <path d="M9 20c3 -2 6 -2 8 0l-1.500 7.500c-3 -2 -5 -2 -8 0z" fill="#4aa8e8" />
          <path d="M18 20.500c3 2 6 2 8.500 0l-2 7.500c-2 2 -6 2 -8 0z" fill="#fcc820" />
        </svg>
      </button>
      <div className="ml-[15px] flex gap-1">
        {TASKS.map((t) => (
          <div key={t.name} className="flex">
            <button
              aria-label={t.name}
              className={`flex h-[38px] items-center justify-center rounded-sm border border-[#8fa3bd] ${t.width} ${t.active ? "bg-linear-to-br from-[#f0e8b8] via-[#e8b040] to-[#d87828]" : "bg-linear-to-b from-[#5f7794] via-[#2b4a72] to-[#1e4070]"}`}
            >
              <svg viewBox="0 0 32 32" className="size-8" fill="none">{t.art}</svg>
            </button>
            {t.stack && <span className="my-px w-[3px] rounded-r border-r border-[#7389a6] bg-[#2b4a72]" />}
            {t.stack && <span className="my-px w-0.5 rounded-r border-r border-[#54698a]" />}
          </div>
        ))}
      </div>
      <div className="ml-auto flex items-center font-['Noto_Sans',sans-serif] text-xs">
        <svg viewBox="0 0 16 16" className="mb-1 size-4" fill="none"><path d="M3 4c3 -3 5 2 10 -2" stroke="#bbb" /><rect x="1" y="6" width="14" height="9" rx="1" fill="#ccc" stroke="#666" /><path d="M3 8.500h10M3 10.500h10M5 12.500h6" stroke="#555" strokeDasharray="1 1" /></svg>
        <svg viewBox="0 0 16 16" className="mb-1.5 ml-[7px] size-4"><circle cx="8" cy="8" r="7.500" fill="#1414b0" stroke="#b8c4e8" /><text x="8" y="12" fontSize="11" fontWeight="bold" textAnchor="middle" fill="#fff">?</text></svg>
        <svg viewBox="0 0 10 18" className="mb-1.5 ml-[9px] h-[18px] w-2.5" fill="none" stroke="#fff"><path d="M1.500 3.500h5v3h-5zM3.500 3.500v-2h5v3h-2" /><path d="M2 14h5l-2.500 2.500z" fill="#fff" stroke="none" /></svg>
        <svg viewBox="0 0 8 5" className="ml-[9px] h-[5px] w-2"><path d="M4 0l4 5H0z" fill="#fff" /></svg>
        <svg viewBox="0 0 16 16" className="mt-0.5 ml-[13px] size-4"><path d="M1.500 1v14" stroke="#fff" strokeWidth="1.400" /><path d="M3 2c3 -1 4 2 8 0v7c-4 1 -5 -1 -8 0z" fill="#fff" /><circle cx="11" cy="11" r="4.500" fill="#d82818" /><path d="M9 9l4 4M13 9l-4 4" stroke="#fff" strokeWidth="1.400" /></svg>
        <svg viewBox="0 0 16 16" className="mt-0.5 ml-[7px] size-4" fill="none" stroke="#fff" strokeWidth="1.300"><path d="M6 4h9v7H5V9M8 14h6M11 11v3M1 2v3c0 3 4 3 4 0V2M3 7v4h3M2.500 1v2M4 1v2" /></svg>
        <div className="ml-3 w-[66px] text-center leading-[18px]">
          <div>23:41</div>
          <div>2025/2/13</div>
        </div>
        <button aria-label="Show desktop" className="ml-1.5 h-[38px] w-3.5 border border-[#6f87a8] bg-linear-to-b from-[#5f7794] to-[#14305a]" />
      </div>
    </footer>
  );
}

export default function App() {
  return (
    <div className="relative flex h-screen min-h-[600px] w-full flex-col overflow-hidden bg-black">
      <TitleBar />
      <div className="flex min-h-0 flex-1">
        <div className="w-2 shrink-0 border-r border-l border-r-[#2a3a4a] border-l-[#3a4a5a] bg-linear-to-b from-[#c6daf5] via-[#b4cdf0] to-[#b9d1f2]" />
        <div className="flex min-w-0 flex-1 flex-col">
          <Header />
          <div className="flex min-h-0 flex-1">
            <Sidebar />
            <main className="relative min-w-0 flex-1 overflow-hidden bg-black">
              <DrillChart />
            </main>
            <ToolPanel />
          </div>
          <CommandRow />
          <div className="h-[31px] shrink-0 border-t border-b-2 border-l border-t-[#777] border-b-white border-l-[#777] bg-[#6f9b98] pt-px pl-px">
            <div className="h-[27px] border border-b-2 border-black bg-[#b3ffff] shadow-[inset_2px_2px_0_#d6ffff,inset_0_-3px_0_#62a8a8]" />
          </div>
        </div>
      </div>
      <div className="h-[7px] shrink-0 border-b border-[#2a3a4a] bg-[linear-gradient(90deg,#b4cdf0_0%,#a4c4f0_50%,#8fb6ee_80%,#5f9ae0_100%)]" />
      <Taskbar />
      <DrillToolManager />
    </div>
  );
}
